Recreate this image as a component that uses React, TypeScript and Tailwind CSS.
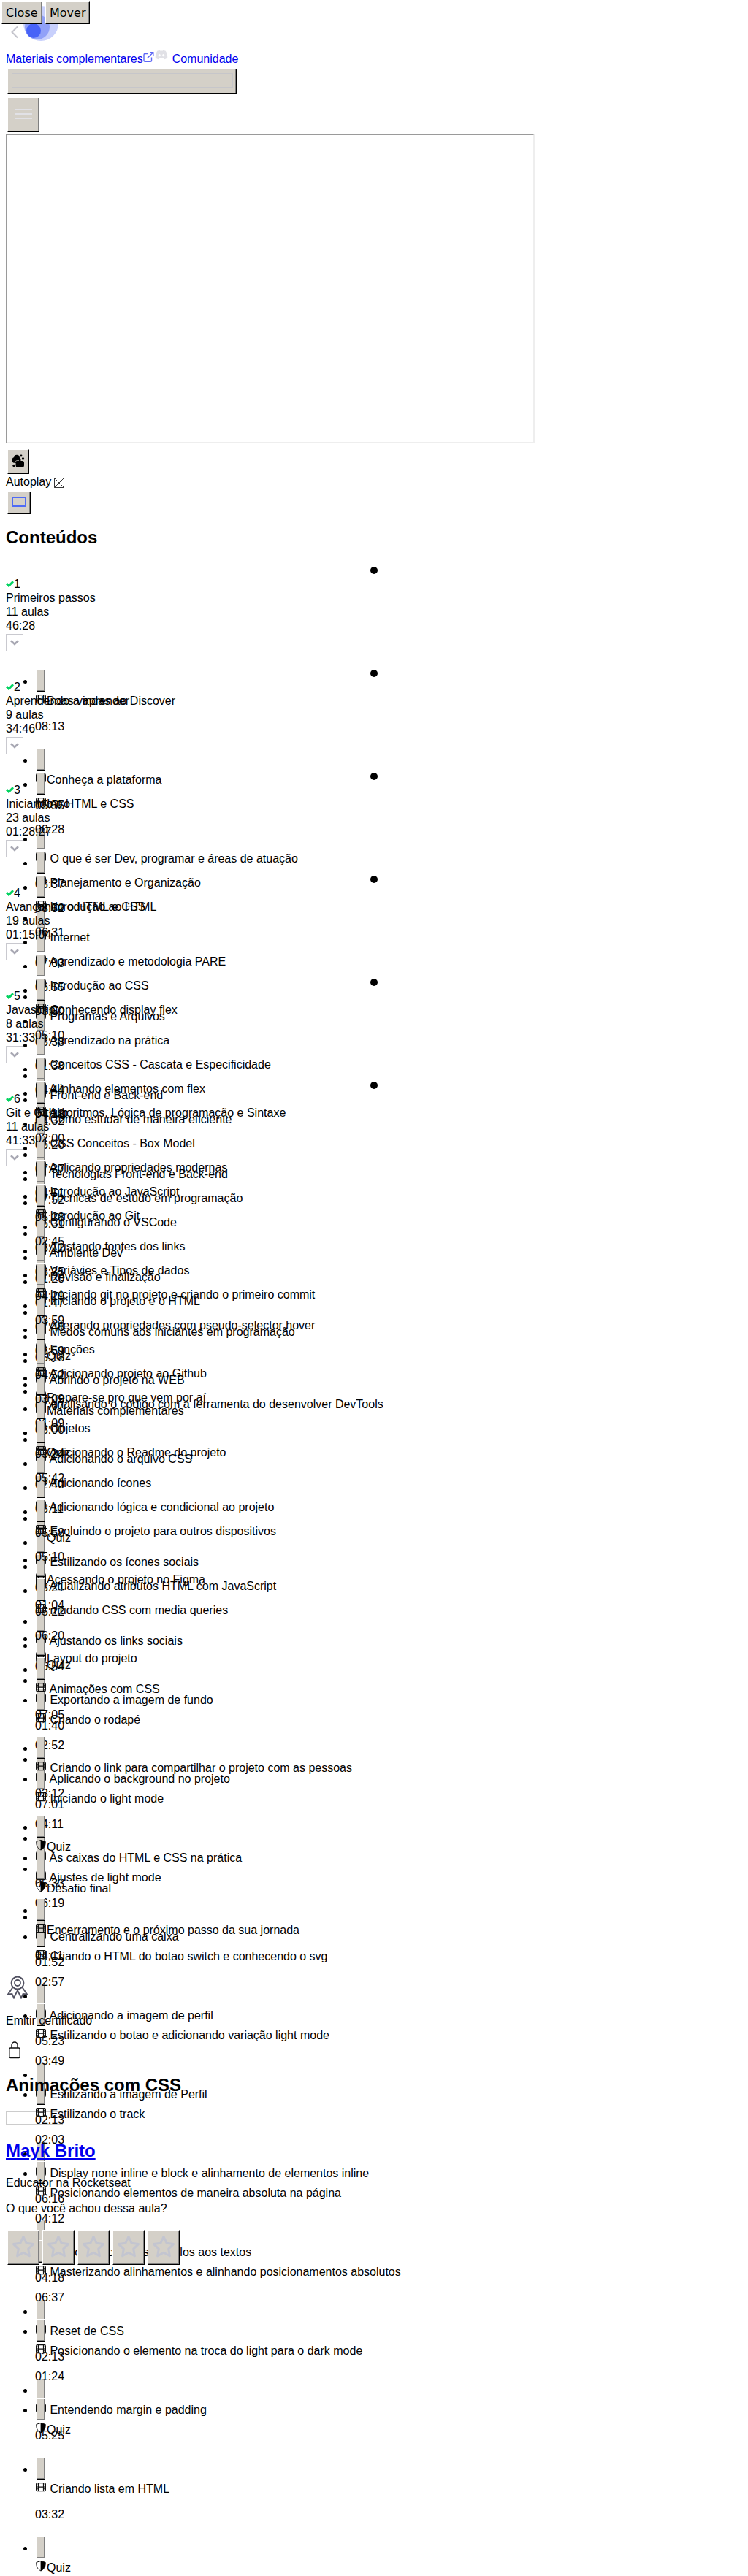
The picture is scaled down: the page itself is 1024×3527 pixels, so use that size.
import React from "react";
import { FaDiscord } from "react-icons/fa";

type Lesson = { title: string; time?: string; kind?: "quiz"; tight?: boolean };
type Module = { name: string; count: string; total: string; lessons: Lesson[] };

const v = (title: string, time?: string): Lesson => ({ title, time });
const t = (title: string, time?: string): Lesson => ({ title, time, tight: true });
const q = (title: string): Lesson => ({ title, kind: "quiz", tight: true });

const modules: Module[] = [
  {
    name: "Primeiros passos",
    count: "11 aulas",
    total: "46:28",
    lessons: [
      t("Boas vindas ao Discover", "08:13"),
      t("Conheça a plataforma", "05:55"),
      v("O que é ser Dev, programar e áreas de atuação", "03:37"),
      v("Internet", "07:03"),
      v("Programas e Arquivos", "03:38"),
      v("Front-end e Back-end", "04:32"),
      v("Tecnologias Front-end e Back-end", "07:52"),
      v("Ambiente Dev", "01:20"),
      v("Medos comuns aos iniciantes em programação", "05:18"),
      t("Materiais complementares"),
      q("Quiz"),
    ],
  },
  {
    name: "Aprendendo a aprender",
    count: "9 aulas",
    total: "34:46",
    lessons: [
      t("Intro", "00:28"),
      v("Planejamento e Organização", "08:52"),
      v("Aprendizado e metodologia PARE", "06:55"),
      v("Aprendizado na prática", "01:38"),
      v("Como estudar de maneira eficiente", "06:26"),
      v("Técnicas de estudo em programação", "06:31"),
      v("Revisão e finalização", "01:47"),
      q("Quiz"),
      t("Prepare-se pro que vem por aí", "01:09"),
    ],
  },
  {
    name: "Iniciando o HTML e CSS",
    count: "23 aulas",
    total: "01:28:27",
    lessons: [
      v("Introdução ao HTML", "06:31"),
      v("Introdução ao CSS", "03:50"),
      v("Conceitos CSS - Cascata e Especificidade", "04:44"),
      v("CSS Conceitos - Box Model", "07:37"),
      v("Configurando o VSCode", "03:12"),
      v("Iniciando o projeto e o HTML", "07:48"),
      v("Abrindo o projeto na WEB", "07:07"),
      v("Adicionando o arquivo CSS", "02:40"),
      q("Quiz"),
      t("Acessando o projeto no Figma", "01:04"),
      t("Layout do projeto"),
      v("Exportando a imagem de fundo", "01:40"),
      v("Aplicando o background no projeto", "07:01"),
      v("As caixas do HTML e CSS na prática", "05:33"),
      v("Centralizando uma caixa", "01:52"),
      v("Adicionando a imagem de perfil", "05:23"),
      v("Estilizando a imagem de Perfil", "02:13"),
      v("Display none inline e block e alinhamento de elementos inline", "06:16"),
      v("Adicionando fontes e estilos aos textos", "04:18"),
      v("Reset de CSS", "02:13"),
      v("Entendendo margin e padding", "05:25"),
      v("Criando lista em HTML", "03:32"),
      q("Quiz"),
    ],
  },
  {
    name: "Avançando o HTML e CSS",
    count: "19 aulas",
    total: "01:15:04",
    lessons: [
      v("Conhecendo display flex", "05:10"),
      v("Alinhando elementos com flex", "04:18"),
      v("Aplicando propriedades modernas", "04:51"),
      v("Ajustando fontes dos links", "03:35"),
      v("Alterando propriedades com pseudo-selector hover", "03:59"),
      v("Analisando o código com a ferramenta do desenvolver DevTools", "03:00"),
      v("Adicionando ícones", "03:11"),
      v("Estilizando os ícones sociais", "03:21"),
      v("Ajustando os links sociais", "06:54"),
      v("Criando o rodapé", "02:52"),
      v("Iniciando o light mode", "04:11"),
      v("Ajustes de light mode", "06:19"),
      v("Criando o HTML do botao switch e conhecendo o svg", "02:57"),
      v("Estilizando o botao e adicionando variação light mode", "03:49"),
      v("Estilizando o track", "02:03"),
      v("Posicionando elementos de maneira absoluta na página", "04:12"),
      v("Masterizando alinhamentos e alinhando posicionamentos absolutos", "06:37"),
      v("Posicionando o elemento na troca do light para o dark mode", "01:24"),
      q("Quiz"),
    ],
  },
  {
    name: "Javascript",
    count: "8 aulas",
    total: "31:33",
    lessons: [
      v("Algoritmos, Lógica de programação e Sintaxe", "02:00"),
      v("Introdução ao JavaScript", "05:28"),
      v("Variávies e Tipos de dados", "04:29"),
      v("Funções", "04:52"),
      v("Objetos", "03:24"),
      v("Adicionando lógica e condicional ao projeto", "05:58"),
      v("Atualizando atributos HTML com JavaScript", "05:22"),
      q("Quiz"),
    ],
  },
  {
    name: "Git e Github",
    count: "11 aulas",
    total: "41:33",
    lessons: [
      v("Introdução ao Git", "02:45"),
      v("Iniciando git no projeto e criando o primeiro commit", "03:59"),
      v("Adicionando projeto ao Github", "03:09"),
      v("Adicionando o Readme do projeto", "05:42"),
      v("Evoluindo o projeto para outros dispositivos", "05:10"),
      v("mudando CSS com media queries", "06:20"),
      v("Animações com CSS", "07:05"),
      v("Criando o link para compartilhar o projeto com as pessoas", "03:12"),
      q("Quiz"),
      q("Desafio final"),
      t("Encerramento e o próximo passo da sua jornada", "04:11"),
    ],
  },
];

function Bevel({ className, children }: { className: string; children?: React.ReactNode }) {
  return (
    <button
      className={
        "inline-block shrink-0 border border-t-white border-l-white border-r-black border-b-black bg-[#d4d0c8] text-left align-top text-black shadow-[inset_-1px_-1px_0_#808080] " +
        className
      }
    >
      {children}
    </button>
  );
}

function FilmIcon() {
  return (
    <svg className="-mt-1 inline-block size-4 align-baseline" viewBox="0 0 16 16" fill="none" stroke="#111">
      <rect x="1.600" y="2.600" width="12.800" height="11" rx="1.600" strokeWidth="1.200" />
      <path d="M4.500 2.500v11M11.500 2.500v11M4.500 8.100h7" strokeWidth="1.200" />
      <path d="M1.500 5.300h2.600M1.500 8h2.600M1.500 10.800h2.600M11.900 5.300h2.600M11.900 8h2.600M11.900 10.800h2.600" strokeWidth="1" />
    </svg>
  );
}

function ShieldIcon() {
  return (
    <svg className="-mt-1 inline-block size-4 align-baseline" viewBox="0 0 16 16">
      <path d="M8 1.500 14.200 3.300c.4 5-1.400 9.400-6.200 11.700Z" stroke="#000" strokeWidth=".8" />
      <path d="M8 1.500 1.800 3.300C1.400 8.300 3.200 12.700 8 15" fill="none" stroke="#111" strokeWidth="1" />
    </svg>
  );
}

function LessonItem({ lesson }: { lesson: Lesson }) {
  return (
    <li className={lesson.time ? "h-[108px]" : "h-[57px]"}>
      <div className="-ml-4 flex h-[35px] items-start">
        <span className="mt-[17px] mr-[11px] inline-block size-[5px] rounded-full bg-black" />
        <Bevel className="mt-[2px] ml-[2px] h-[31px] w-[12px]" />
      </div>
      <div className="h-[19px] pt-[1px] leading-[19px] whitespace-pre">
        {lesson.kind === "quiz" ? <ShieldIcon /> : <FilmIcon />}
        {(lesson.tight ? "" : " ") + lesson.title}
      </div>
      {lesson.time && <p className="mt-[17px] leading-[19px]">{lesson.time}</p>}
    </li>
  );
}

function ModuleBlock({ module, index }: { module: Module; index: number }) {
  const last = index === modules.length - 1;
  return (
    <section>
      <div className="h-[141px] leading-[19px]">
        <div className="-ml-[1px] flex h-[17px] justify-center pt-[3px]">
          <span className="size-[10px] rounded-full bg-black" />
        </div>
        <div className="flex h-[19px] items-center">
          <svg className="h-[9px] w-[11px]" viewBox="0 0 11 9" fill="none" stroke="#04d361" strokeWidth="3">
            <path d="M1 4.2 4.1 7.2 10 1.2" />
          </svg>
          {index + 1}
        </div>
        <div>{module.name}</div>
        <div>{module.count}</div>
        <div>{module.total}</div>
        <div className="mt-[2px] flex size-6 items-center justify-center border border-[#c9c9cf]">
          <svg className="h-[8px] w-[12px]" viewBox="0 0 12 8" fill="none" stroke="#a8a8b3" strokeWidth="2.6">
            <path d="M1 1.2 6 6 11 1.2" />
          </svg>
        </div>
      </div>
      <ul className={last ? "pl-10" : "h-0 pl-10"}>
        {module.lessons.map((lesson, i) => (
          <LessonItem key={i} lesson={lesson} />
        ))}
      </ul>
    </section>
  );
}

export default function App() {
  return (
    <div className="relative h-[3527px] w-[1024px] overflow-hidden bg-white font-['Liberation_Sans',Arial,sans-serif] text-[16px] text-black">
      <div className="absolute top-[2px] left-[2px] z-10 flex gap-1 font-['DejaVu_Sans',sans-serif] leading-[19px]">
        <Bevel className="h-[31px] w-[56px] pl-[5px]">Close</Bevel>
        <Bevel className="h-[31px] w-[61px] pl-[5px]">Mover</Bevel>
      </div>

      <div className="px-2 pt-2">
        <svg className="block h-[60px] w-[76px]" viewBox="8 8 76 60" fill="none">
          <path d="M24 36.5 16.5 44l7.5 7.5" stroke="#c4c4cc" strokeWidth="2" />
          <circle cx="56" cy="32" r="24" fill="#c8d0fc" />
          <circle cx="51" cy="37" r="17" fill="#91a1f8" />
          <circle cx="46" cy="42" r="10" fill="#4863f7" />
        </svg>

        <div className="flex h-[26px] items-start pt-[3px] leading-[19px]">
          <a className="text-[#0000ee] underline">Materiais complementares</a>
          <svg className="h-[14px] w-[15px]" viewBox="0 0 15 14" fill="none" stroke="#5c66f5" strokeWidth="1.4">
            <path d="M7 2.5H2.5a1.5 1.5 0 0 0-1.5 1.5v7.8a1.5 1.5 0 0 0 1.5 1.5H10a1.5 1.5 0 0 0 1.5-1.5V7.5M9.5.7h4.3V5M13.8.7 5.5 8.8" />
          </svg>
          <FaDiscord className="-mt-[5px] ml-[1px] size-[18px] text-[#e1e1e6]" />
          <a className="ml-[6px] text-[#0000ee] underline">Comunidade</a>
        </div>

        <div className="flex flex-col items-start pl-[2px]">
          <Bevel className="h-[35px] w-[314px] px-[5px]">
            <span className="-mt-[3px] block h-[20px] w-[303px] border border-[#c6c6ca]" />
          </Bevel>
          <Bevel className="mt-1 h-[48px] w-[44px] px-[9px]">
            <span className="-mt-[2px] flex flex-col gap-1">
              <span className="h-[2px] w-6 bg-[#e1e1e6]" />
              <span className="h-[2px] w-6 bg-[#e1e1e6]" />
              <span className="h-[2px] w-6 bg-[#e1e1e6]" />
            </span>
          </Bevel>
        </div>

        <div className="mt-[2px] h-[424px] w-[724px] border-2 border-t-[#9a9a9a] border-r-[#eeeeee] border-b-[#eeeeee] border-l-[#9a9a9a]" />

        <div className="mt-2 pl-[2px]">
          <Bevel className="h-[34px] w-[30px] px-[5px]">
            <svg className="-mt-[3px] block size-[18px]" viewBox="0 0 18 18">
              <circle cx="7" cy="4.500" r="3.800" />
              <circle cx="4.500" cy="8" r="4" />
              <circle cx="8.500" cy="8" r="4" />
              <rect x="5.500" y="9" width="11.500" height="8.500" rx="2.500" />
              <circle cx="13" cy="2" r="1.400" />
              <circle cx="15.500" cy="6" r="1.700" />
              <circle cx="3" cy="15.500" r="1.700" />
              <path d="M4 12.500c.5-3.500 3-4.500 6-4" fill="none" stroke="#d4d0c8" strokeWidth=".7" />
            </svg>
          </Bevel>
        </div>
        <div className="mt-[1px] flex h-[22px] items-start leading-[19px]">
          Autoplay
          <svg className="mt-[4px] ml-[4px] size-[14px]" viewBox="0 0 14 14" fill="none" stroke="#222">
            <path d="M.5.5h13v13H.5zM.5.5l13 13M13.5.5l-13 13" strokeWidth=".9" />
          </svg>
        </div>
        <div className="mt-[1px] pl-[2px]">
          <Bevel className="h-[31px] w-[32px] px-[5px]">
            <span className="-mt-[3px] block h-[14px] w-5 rounded-[1px] border-2 border-[#4f6bf5]" />
          </Bevel>
        </div>

        <h2 className="mt-[18px] h-[51px] text-[24px] leading-[28px] font-bold">Conteúdos</h2>

        {modules.map((m, i) => (
          <ModuleBlock key={i} module={m} index={i} />
        ))}

        <div className="h-[52px]">
          <svg className="ml-[2px] h-8 w-7" viewBox="0 0 28 32" fill="none" stroke="#515161" strokeWidth="1.8">
            <circle cx="14" cy="10" r="8.5" />
            <circle cx="14" cy="10" r="4" />
            <path d="M7.5 16 1 25.5l5.5-.5 2.5 5.5 5-10.5 5 10.5 2.5-5.5 5.5.5L20.500 16" />
          </svg>
        </div>
        <p className="leading-[19px]">Emitir certificado</p>
        <svg className="mt-[19px] ml-1 h-6 w-4" viewBox="0 0 16 24" fill="none" stroke="#111" strokeWidth="1.4">
          <rect x=".8" y="9" width="14.400" height="13.500" rx="1.5" />
          <path d="M4 9V5a4 4 0 0 1 8 0v4" />
        </svg>
        <h2 className="mt-[22px] text-[24px] leading-[28px] font-bold">Animações com CSS</h2>
        <div className="mt-[22px] h-[18px] w-[78px] border border-[#cccccc]" />
        <h2 className="mt-[22px] text-[24px] leading-[28px] font-bold">
          <a className="text-[#0000ee] underline">Mayk Brito</a>
        </h2>
        <p className="mt-[20px] leading-[19px]">Educator na Rocketseat</p>
        <p className="mt-[16px] leading-[19px]">O que você achou dessa aula?</p>
        <div className="mt-[20px] flex gap-1 pl-[2px]">
          {[0, 1, 2, 3, 4].map((i) => (
            <Bevel key={i} className="relative h-[48px] w-[44px] px-[5px]">
              <svg className="-mt-[3px] block size-8" viewBox="0 0 32 32" fill="none" stroke="#c3c5d0" strokeWidth="3" strokeLinejoin="round">
                <path d="m16 2.500 4.200 8.800 9.300 1.300-6.800 6.600 1.700 9.600L16 24.300l-8.400 4.500 1.700-9.600-6.800-6.600 9.300-1.300Z" />
              </svg>
            </Bevel>
          ))}
        </div>
      </div>
    </div>
  );
}
